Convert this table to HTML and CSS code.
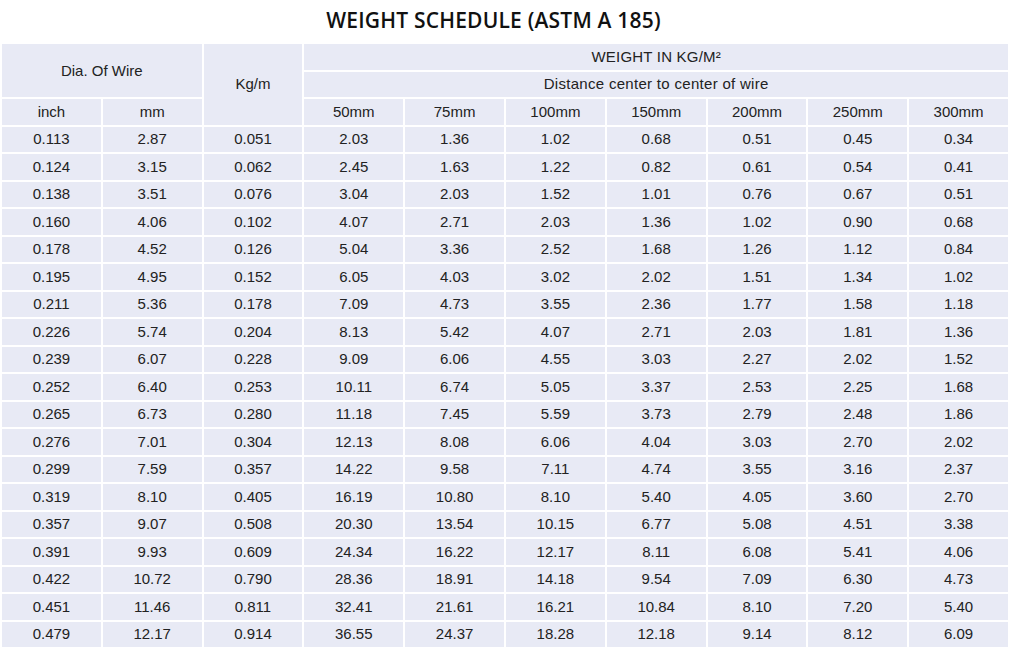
FILE: index.html
```html
<!DOCTYPE html>
<html>
<head>
<meta charset="utf-8">
<link rel="stylesheet" href="styles.css">
</head>
<body>
<h1 class="title">WEIGHT SCHEDULE (ASTM A 185)</h1>
<table class="sched">
<thead>
<tr><th colspan="2" rowspan="2">Dia. Of Wire</th><th rowspan="3">Kg/m</th><th colspan="7" class="small">WEIGHT IN KG/M²</th></tr>
<tr><th colspan="7" class="wide">Distance center to center of wire</th></tr>
<tr><th>inch</th><th>mm</th><th>50mm</th><th>75mm</th><th>100mm</th><th>150mm</th><th>200mm</th><th>250mm</th><th>300mm</th></tr>
</thead>
<tbody>
<tr><td>0.113</td><td>2.87</td><td>0.051</td><td>2.03</td><td>1.36</td><td>1.02</td><td>0.68</td><td>0.51</td><td>0.45</td><td>0.34</td></tr>
<tr><td>0.124</td><td>3.15</td><td>0.062</td><td>2.45</td><td>1.63</td><td>1.22</td><td>0.82</td><td>0.61</td><td>0.54</td><td>0.41</td></tr>
<tr><td>0.138</td><td>3.51</td><td>0.076</td><td>3.04</td><td>2.03</td><td>1.52</td><td>1.01</td><td>0.76</td><td>0.67</td><td>0.51</td></tr>
<tr><td>0.160</td><td>4.06</td><td>0.102</td><td>4.07</td><td>2.71</td><td>2.03</td><td>1.36</td><td>1.02</td><td>0.90</td><td>0.68</td></tr>
<tr><td>0.178</td><td>4.52</td><td>0.126</td><td>5.04</td><td>3.36</td><td>2.52</td><td>1.68</td><td>1.26</td><td>1.12</td><td>0.84</td></tr>
<tr><td>0.195</td><td>4.95</td><td>0.152</td><td>6.05</td><td>4.03</td><td>3.02</td><td>2.02</td><td>1.51</td><td>1.34</td><td>1.02</td></tr>
<tr><td>0.211</td><td>5.36</td><td>0.178</td><td>7.09</td><td>4.73</td><td>3.55</td><td>2.36</td><td>1.77</td><td>1.58</td><td>1.18</td></tr>
<tr><td>0.226</td><td>5.74</td><td>0.204</td><td>8.13</td><td>5.42</td><td>4.07</td><td>2.71</td><td>2.03</td><td>1.81</td><td>1.36</td></tr>
<tr><td>0.239</td><td>6.07</td><td>0.228</td><td>9.09</td><td>6.06</td><td>4.55</td><td>3.03</td><td>2.27</td><td>2.02</td><td>1.52</td></tr>
<tr><td>0.252</td><td>6.40</td><td>0.253</td><td>10.11</td><td>6.74</td><td>5.05</td><td>3.37</td><td>2.53</td><td>2.25</td><td>1.68</td></tr>
<tr><td>0.265</td><td>6.73</td><td>0.280</td><td>11.18</td><td>7.45</td><td>5.59</td><td>3.73</td><td>2.79</td><td>2.48</td><td>1.86</td></tr>
<tr><td>0.276</td><td>7.01</td><td>0.304</td><td>12.13</td><td>8.08</td><td>6.06</td><td>4.04</td><td>3.03</td><td>2.70</td><td>2.02</td></tr>
<tr><td>0.299</td><td>7.59</td><td>0.357</td><td>14.22</td><td>9.58</td><td>7.11</td><td>4.74</td><td>3.55</td><td>3.16</td><td>2.37</td></tr>
<tr><td>0.319</td><td>8.10</td><td>0.405</td><td>16.19</td><td>10.80</td><td>8.10</td><td>5.40</td><td>4.05</td><td>3.60</td><td>2.70</td></tr>
<tr><td>0.357</td><td>9.07</td><td>0.508</td><td>20.30</td><td>13.54</td><td>10.15</td><td>6.77</td><td>5.08</td><td>4.51</td><td>3.38</td></tr>
<tr><td>0.391</td><td>9.93</td><td>0.609</td><td>24.34</td><td>16.22</td><td>12.17</td><td>8.11</td><td>6.08</td><td>5.41</td><td>4.06</td></tr>
<tr><td>0.422</td><td>10.72</td><td>0.790</td><td>28.36</td><td>18.91</td><td>14.18</td><td>9.54</td><td>7.09</td><td>6.30</td><td>4.73</td></tr>
<tr><td>0.451</td><td>11.46</td><td>0.811</td><td>32.41</td><td>21.61</td><td>16.21</td><td>10.84</td><td>8.10</td><td>7.20</td><td>5.40</td></tr>
<tr><td>0.479</td><td>12.17</td><td>0.914</td><td>36.55</td><td>24.37</td><td>18.28</td><td>12.18</td><td>9.14</td><td>8.12</td><td>6.09</td></tr>
</tbody>
</table>
</body>
</html>
```
FILE: styles.css
```css
html, body {
  margin: 0;
  padding: 0;
  background: #ffffff;
}
body {
  width: 1009px;
  height: 648px;
  overflow: hidden;
}
.title {
  margin: 0;
  height: 42px;
  line-height: 40px;
  padding-right: 22px;
  text-align: center;
  font-family: "Open Sans", "DejaVu Sans", sans-serif;
  font-weight: 600;
  font-size: 21px;
  letter-spacing: 0.2px;
  color: #111;
}
.sched {
  width: 1010px;
  border-collapse: collapse;
  table-layout: fixed;
  font-family: "Liberation Sans", Arial, sans-serif;
  font-size: 15px;
  color: #222;
}
.sched th, .sched td {
  background: #e8eaf5;
  border: 2px solid #ffffff;
  height: 24.5px;
  padding: 0 0 1px;
  text-align: center;
  vertical-align: middle;
  font-weight: normal;
}
.sched th.small {
  letter-spacing: 0.2px;
}
.sched th.wide {
  letter-spacing: 0.3px;
}
```
